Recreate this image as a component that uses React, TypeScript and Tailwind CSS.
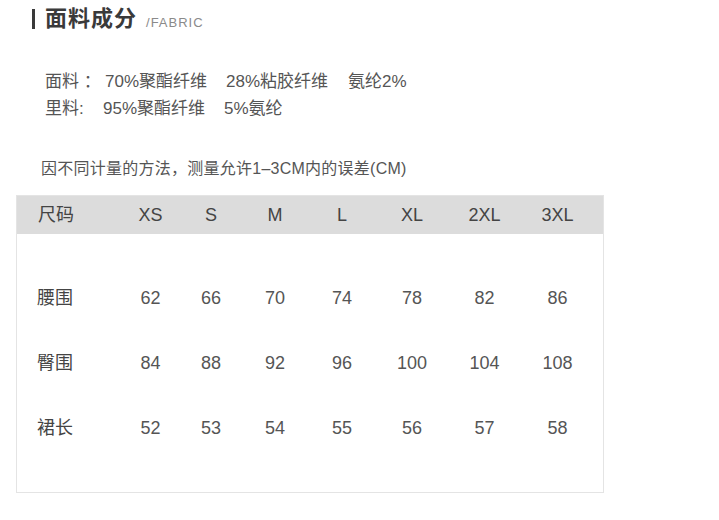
import React from "react";

const font = { fontFamily: '"Liberation Sans", "Noto Sans CJK SC", sans-serif' };

const sizes = ["XS", "S", "M", "L", "XL", "2XL", "3XL"];
const rows: [string, string[]][] = [
  ["腰围", ["62", "66", "70", "74", "78", "82", "86"]],
  ["臀围", ["84", "88", "92", "96", "100", "104", "108"]],
  ["裙长", ["52", "53", "54", "55", "56", "57", "58"]],
];

const grid = "grid grid-cols-[104px_59px_62px_66px_68px_72px_73px_73px_1fr] items-center";

export default function App() {
  return (
    <div className="w-[719px] h-[520px] bg-white overflow-hidden" style={font}>
      <div className="flex items-center pl-[32px] pt-[4px] h-[30px] box-content">
        <div className="w-[3px] h-[20px] bg-[#3a3a3a]" />
        <div className="ml-[10px] text-[22px] leading-[30px] font-bold text-[#3a3a3a] tracking-[1px]">面料成分</div>
        <div className="ml-[9px] mt-[8px] text-[13px] text-[#8a8a8a] tracking-[1px]">/FABRIC</div>
      </div>

      <div className="mt-[34px] pl-[45px] text-[17px] leading-[27px] text-[#555]">
        <div className="flex whitespace-pre">
          <span className="w-[60px]">面料 ：</span>
          <span className="w-[121px]">70%聚酯纤维</span>
          <span className="w-[122px]">28%粘胶纤维</span>
          <span>氨纶2%</span>
        </div>
        <div className="flex whitespace-pre">
          <span className="w-[58px]">里料:</span>
          <span className="w-[121px]">95%聚酯纤维</span>
          <span>5%氨纶</span>
        </div>
      </div>

      <div className="mt-[37px] pl-[41px] text-[16px] leading-[20px] text-[#555] tracking-[0.25px]">
        因不同计量的方法，测量允许1–3CM内的误差(CM)
      </div>

      <div className="mt-[16px] ml-[16px] w-[588px] h-[298px] border border-[#e4e4e4] bg-white">
        <div className={`${grid} h-[38px] bg-[#dcdcdc] text-[18px] text-[#444]`}>
          <div className="pl-[21px]">尺码</div>
          {sizes.map((s) => (
            <div key={s} className="text-center">{s}</div>
          ))}
          <div />
        </div>
        <div className="pt-[32px]">
          {rows.map(([label, vals]) => (
            <div key={label} className={`${grid} h-[65px] text-[18px] text-[#555]`}>
              <div className="pl-[20px] text-[#444]">{label}</div>
              {vals.map((v, i) => (
                <div key={i} className="text-center">{v}</div>
              ))}
              <div />
            </div>
          ))}
        </div>
      </div>
    </div>
  );
}
